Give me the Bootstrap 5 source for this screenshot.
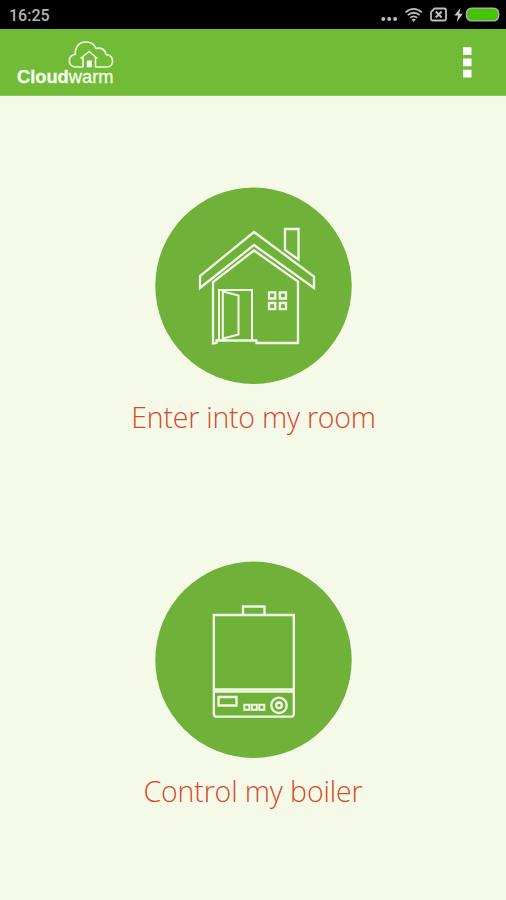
<!DOCTYPE html>
<html lang="en">
<head>
<meta charset="utf-8">
<meta name="viewport" content="width=device-width, initial-scale=1">
<title>Cloudwarm</title>
<link href="https://cdn.jsdelivr.net/npm/bootstrap@5.3.0/dist/css/bootstrap.min.css" rel="stylesheet">
<style>
body { background: #f4f9e8; font-family: "Open Sans", sans-serif; }
.status-bar { height: 29px; background: #000; color: #b4b4b4; padding: 2px 6px 0 9px; font: 500 16px/1 Roboto, sans-serif; }
.app-bar { height: 67px; background: #72bb37; border-bottom: 1px solid #8cc65c; }
.brand { width: 98px; height: 48px; margin: 9px 0 0 17px; }
.brand-name { font-family: "Liberation Sans", sans-serif; font-size: 19px; fill: #f7fff0; stroke: #f7fff0; stroke-width: .3; }
.menu-btn { width: 30px; height: 44px; margin: 12px 24px 0 0; }
.tile { width: 300px; color: #d9492a; font-weight: 300; font-size: 28.5px; line-height: 40px; }
.tile-room { margin-top: 91px; }
.tile-boiler { margin-top: 124px; }
.tile svg { width: 197px; height: 197px; }
.tile-label { margin-top: 13px; white-space: nowrap; }
.room-label { letter-spacing: -.23px; padding-left: 1px; }
.boiler-label { letter-spacing: -.13px; }
.line-art { fill: none; stroke: #f3f9e8; stroke-width: 2.3; }
</style>
</head>
<body class="min-vh-100 overflow-hidden">
<header>
  <div class="status-bar d-flex align-items-center justify-content-between">
    <span>16:25</span>
    <svg width="120" height="27" viewBox="380 2 120 27" fill="none" stroke="#bdbdbd" stroke-width="1.8">
      <g fill="#bdbdbd" stroke="none"><circle cx="383.3" cy="19" r="2"/><circle cx="389.2" cy="19" r="2"/><circle cx="395.1" cy="19" r="2"/></g>
      <path d="M405.5 12.4q8.2-7 16.4 0M407.7 15.1q6-4.8 12 0M410.2 17.7q3.5-2.6 7 0"/>
      <path d="M413.7 22l-2.2-2.6q2.2-1.5 4.4 0z" fill="#bdbdbd" stroke="none"/>
      <path d="M434.5 8.5h10q1.5 0 1.5 1.5v9q0 1.5-1.5 1.5h-12q-1.5 0-1.5-1.5v-7z"/>
      <path d="M435.8 11.5l5.800 6M441.600 11.500l-5.800 6" stroke-width="2"/>
      <path d="M460.500 8l-6.200 7.500h3.800l-1.400 6.500 6.200-8.300h-3.700z" fill="#c8c8c8" stroke="none"/>
      <rect x="466.600" y="8.200" width="32" height="12.600" rx="5" fill="#43c600" stroke="#aaa" stroke-width="1.600"/>
    </svg>
  </div>
  <div class="app-bar d-flex justify-content-between align-items-start">
    <svg class="brand" viewBox="17 38 98 48" role="img" aria-label="Cloudwarm">
      <path d="M80.500 58.500l8.500-7 8.500 7M83 57v10H74.500C67.500 65.500 67.500 55.500 75.200 54.500 75 46.500 79.500 42 85.500 42 91 42 94.500 44.500 96 48.500 101.500 47 105.500 50 106 54.500 115 55.500 114 67 107 67H95.500V57" fill="none" stroke="#effbe4" stroke-width="1.600" stroke-linejoin="round"/>
      <path d="M86.800 60.500h5v6.800h-5z" fill="#fff"/>
      <text class="brand-name" x="17" y="83" textLength="96.500" lengthAdjust="spacingAndGlyphs"><tspan font-weight="700">Cloud</tspan><tspan>warm</tspan></text>
    </svg>
    <button class="menu-btn btn p-0 border-0 d-flex" aria-label="Menu">
      <svg width="30" height="44" viewBox="452 41 30 44" fill="#fff"><path d="M463 47.200h8.500v7.800H463zM463 58.500h8.500v7.800H463zM463 69.700h8.500v7.800H463z"/></svg>
    </button>
  </div>
</header>
<main class="d-flex flex-column align-items-center">
  <a class="tile tile-room d-flex flex-column align-items-center text-decoration-none" href="#">
    <svg viewBox="155 187 197 197">
      <circle cx="253.500" cy="285.800" r="98.200" fill="#6fb139"/>
      <g class="line-art">
        <path d="M254 232l60 44.500v11.500l-60-43-54 43v-12z"/>
        <path d="M213 343.500v-61.500l41-31.500 44 31v61.500h-41.500v-2.500H216.500v2.500z"/>
        <path d="M285 229h13.500v30.500l-13.500-9.500z"/>
        <path d="M219 340.500v-50.500h33v50.500M222.800 290v50.500M223 291.500l15.500 4v39l-15.500 4" stroke-width="2"/>
        <path d="M269 292.300h6.300v6.200H269zM279.800 292.300h6.200v6.200h-6.200zM269 303h6.300v6.200H269zM279.800 303h6.200v6.200h-6.200z"/>
      </g>
    </svg>
    <span class="tile-label room-label">Enter into my room</span>
  </a>
  <a class="tile tile-boiler d-flex flex-column align-items-center text-decoration-none" href="#">
    <svg viewBox="155 561 197 197">
      <circle cx="253.500" cy="659.800" r="98.200" fill="#6fb139"/>
      <g class="line-art">
        <path d="M243 615v-8.500h21.500v8.500"/>
        <path d="M213.800 689.500v-74.500h80v74.500z"/>
        <path d="M213.800 691.700h80v22q0 3-3 3h-74q-3 0-3-3z"/>
        <path d="M218.500 697h18v8.500h-18z"/>
        <path d="M244.300 704.800h5v5h-5zM251.800 704.800h5v5h-5zM259.300 704.800h5v5h-5z" stroke-width="2"/>
        <circle cx="279" cy="705.300" r="7.700"/><circle cx="279" cy="705.300" r="2.800"/>
      </g>
    </svg>
    <span class="tile-label boiler-label">Control my boiler</span>
  </a>
</main>
<script src="https://cdn.jsdelivr.net/npm/bootstrap@5.3.0/dist/js/bootstrap.bundle.min.js"></script>
</body>
</html>
